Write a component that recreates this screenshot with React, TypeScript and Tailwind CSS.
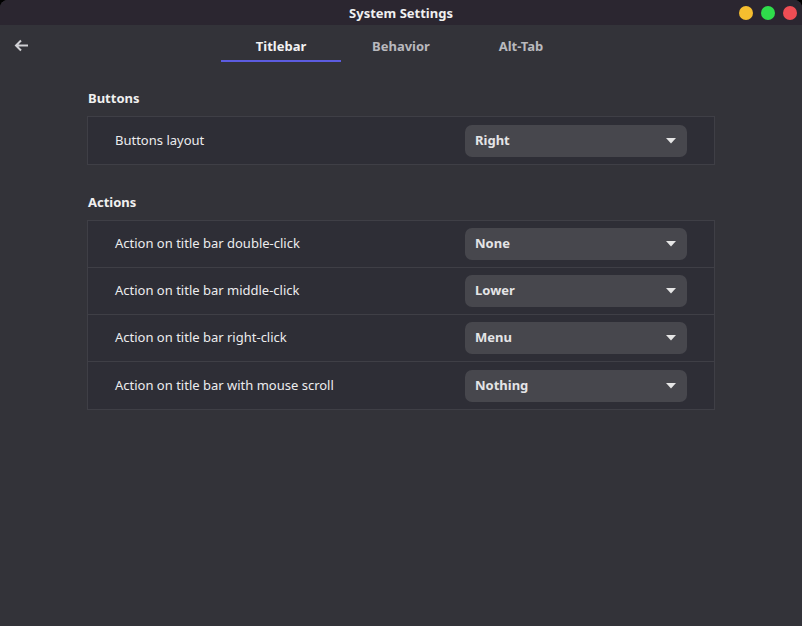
import React from "react";

const Chevron = () => (
  <svg width="10" height="6" viewBox="0 0 10 6" className="shrink-0">
    <path d="M0 0 L10 0 L5 5.5 Z" fill="#e6e6e6" />
  </svg>
);

const Select = ({ value }: { value: string }) => (
  <div className="flex h-[32px] w-[222px] items-center justify-between rounded-[7px] bg-[#47474d] pl-[10px] pr-[11px]">
    <span className="text-[13px] font-bold text-[#e4e4e6]">{value}</span>
    <Chevron />
  </div>
);

const Row = ({ label, value, last }: { label: string; value: string; last?: boolean }) => (
  <div
    className={
      "flex h-[47px] items-center justify-between pl-[27px] pr-[27px] " +
      (last ? "" : "border-b border-[#3f3f46]")
    }
  >
    <span className="text-[13px] text-[#ececee]">{label}</span>
    <Select value={value} />
  </div>
);

export default function App() {
  return (
    <div
      className="flex h-[626px] w-[802px] flex-col overflow-hidden bg-black"
      style={{ fontFamily: '"Noto Sans", "Open Sans", sans-serif' }}
    >
      <div className="flex h-full flex-col overflow-hidden rounded-t-[8px] bg-[#333339]">
        {/* title bar */}
        <div className="relative flex h-[25px] shrink-0 items-center justify-center bg-[#2b2630] pt-[3px]">
          <span className="text-[13px] font-bold text-[#f0f0f0]">System Settings</span>
          <div className="absolute right-[5px] top-[6px] flex gap-[8px]">
            <div className="h-[14px] w-[14px] rounded-full bg-[#f6be2f]" />
            <div className="h-[14px] w-[14px] rounded-full bg-[#2fdd4b]" />
            <div className="h-[14px] w-[14px] rounded-full bg-[#ef4d54]" />
          </div>
        </div>

        {/* tabs */}
        <div className="relative flex h-[37px] shrink-0 items-start justify-center">
          <div className="absolute left-[14px] top-[14px]">
            <svg width="15" height="13" viewBox="0 0 15 13">
              <path d="M7 1.5 L2 6.5 L7 11.5 M2 6.5 L14 6.5" stroke="#d0d0d4" strokeWidth="2" fill="none" />
            </svg>
          </div>
          <div className="flex">
            <div className="flex h-[37px] w-[120px] flex-col items-center justify-between pt-[15px]">
              <span className="text-[13px] font-bold leading-none text-[#f2f2f2]">Titlebar</span>
              <div className="h-[2px] w-full bg-[#5c5ce0]" />
            </div>
            <div className="flex h-[37px] w-[120px] flex-col items-center pt-[15px]">
              <span className="text-[13px] font-bold leading-none text-[#b9b9be]">Behavior</span>
            </div>
            <div className="flex h-[37px] w-[120px] flex-col items-center pt-[15px]">
              <span className="text-[13px] font-bold leading-none text-[#b9b9be]">Alt-Tab</span>
            </div>
          </div>
        </div>

        {/* content */}
        <div className="mx-auto flex w-[628px] flex-col pt-[27px]">
          <div className="mb-[9px] pl-[1px] text-[13px] font-bold leading-[18px] text-[#f0f0f0]">Buttons</div>
          <div className="border border-[#3f3f46] bg-[#2e2e36]">
            <Row label="Buttons layout" value="Right" last />
          </div>

          <div className="mb-[9px] mt-[28px] pl-[1px] text-[13px] font-bold leading-[18px] text-[#f0f0f0]">Actions</div>
          <div className="border border-[#3f3f46] bg-[#2e2e36]">
            <Row label="Action on title bar double-click" value="None" />
            <Row label="Action on title bar middle-click" value="Lower" />
            <Row label="Action on title bar right-click" value="Menu" />
            <Row label="Action on title bar with mouse scroll" value="Nothing" last />
          </div>
        </div>
      </div>
    </div>
  );
}
